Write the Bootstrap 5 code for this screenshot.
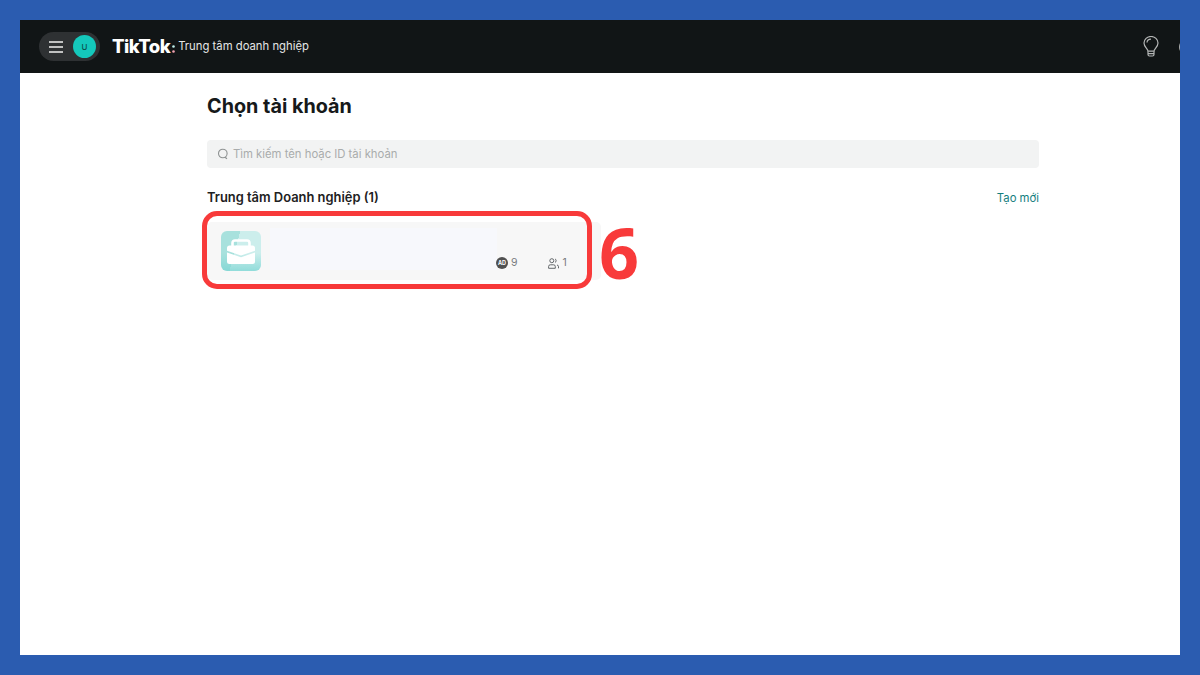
<!DOCTYPE html>
<html lang="vi">
<head>
<meta charset="utf-8">
<title>Chọn tài khoản</title>
<link href="https://cdn.jsdelivr.net/npm/bootstrap@5.3.0/dist/css/bootstrap.min.css" rel="stylesheet">
<style>
html,body{height:100%;margin:0;overflow:hidden}
body{background:#2b5cb0;font-family:Inter,"Liberation Sans",sans-serif;padding:20px 20px 20px 20px}
.frame-in{width:1160px;height:635px;background:#fff;overflow:hidden}
.top-bar{height:53px;background:#111516;padding-left:19px;padding-right:19px}
.pill{width:61px;height:29px;border-radius:15px;background:#2e3133;padding-left:10px;gap:10px}
.avatar-u{width:23px;height:23px;border-radius:50%;background:#14c8bb;color:#0a4f4c;font-size:8px;font-weight:500}
.logo-t{font-size:18.5px;font-weight:800;color:#fff;letter-spacing:-.5px;margin-left:12px;line-height:1}
.logo-mark{margin-left:2px;margin-right:3px;margin-top:4px}
.logo-sub{font-size:11.3px;color:#e4e5e5;line-height:1}
.edge-arc{width:6px;height:18px;overflow:hidden;margin-left:20px;margin-right:-24px}
.content-col{width:832px;margin-left:187px}
.page-ttl{font-size:19.8px;font-weight:700;color:#16191a;line-height:24px;margin:21px 0 0}
.search-box{height:28px;background:#f2f3f3;border-radius:4px;margin-top:22px;padding-left:10px;gap:4px;font-size:11.3px;color:#a9acac}
.sec-row{margin-top:20px;height:20px}
.sec-ttl{font-size:12.9px;font-weight:600;color:#1d2122}
.new-link{font-size:11.3px;color:#137e7e;text-decoration:none}
.biz-card{width:394px;height:58px;background:#f7f7f7;border-radius:5px;margin-top:14px;padding:9px 14px}
.biz-icon{width:40px;height:40px;border-radius:6px;background:linear-gradient(180deg,rgba(134,217,215,0) 55%,rgba(120,212,210,.7)),linear-gradient(105deg,#a8e1dd 0 38%,#cceeec 38%);flex:none}
.biz-name{width:227px;height:42px;background:#f7f8fc;margin-left:9px;margin-top:-3px;flex:none}
.biz-stats{position:absolute;left:289px;top:35px;font-size:10.5px;color:#777b7e;line-height:12px}
.ad-dot{width:12px;height:12px;border-radius:50%;background:#505050;color:#fff;font-size:5.5px;font-weight:700;margin-right:3px}
.stat-b{margin-left:30px}
.red-box{position:absolute;left:-5px;top:-11px;width:390px;height:78px;border:5px solid #f83a3a;border-radius:15px}
.red-six{position:absolute;left:392px;top:-13px;font-family:"Open Sans","Noto Sans",sans-serif;font-weight:700;font-size:70px;line-height:86px;color:#f83a3a}
</style>
</head>
<body>
<div class="frame-in">
  <div class="top-bar d-flex align-items-center">
    <div class="pill d-flex align-items-center">
      <svg width="14" height="12" viewBox="0 0 14 12" aria-hidden="true"><path d="M0 1h14M0 6h14M0 11h14" stroke="#f1f1f1" stroke-width="1.4" fill="none"/></svg>
      <div class="avatar-u d-flex align-items-center justify-content-center">U</div>
    </div>
    <span class="logo-t">TikTok</span>
    <svg class="logo-mark" width="3" height="8" viewBox="0 0 3 8" aria-hidden="true"><circle cx="1.500" cy="1.500" r="1.300" fill="#bfeeea"/><circle cx="1.500" cy="6.500" r="1.300" fill="#f2a3b3"/></svg>
    <span class="logo-sub">Trung tâm doanh nghiệp</span>
    <div class="ms-auto d-flex align-items-center">
      <svg width="16" height="21" viewBox="0 0 16 21" fill="none" stroke="#b4b6b6" stroke-width="1.2" aria-hidden="true"><path d="M5 15.2c0-2.2-4-3.900-4-8.200a7 6.500 0 0 1 14 0c0 4.300-4 6-4 8.200z"/><path d="M5 15.200v3.300q0 1.500 1.500 1.500h3q1.500 0 1.500-1.500v-3.300M5.300 17.600h5.400"/><path d="M4 6.500a4 3.500 0 0 1 4-3.300"/></svg>
      <svg class="edge-arc" viewBox="0 0 6 18" fill="none" stroke="#b4b6b6" stroke-width="1.300" aria-hidden="true"><path d="M8.700 1a8 8 0 0 0 0 16"/></svg>
    </div>
  </div>
  <div class="content-col">
    <h1 class="page-ttl">Chọn tài khoản</h1>
    <div class="search-box d-flex align-items-center">
      <svg width="12" height="12" viewBox="0 0 12 12" fill="none" stroke="#8e9292" stroke-width="1.100" aria-hidden="true"><circle cx="5.800" cy="5.500" r="4.300"/><path d="M8 9.300l2 1.500"/></svg>
      <span>Tìm kiếm tên hoặc ID tài khoản</span>
    </div>
    <div class="sec-row d-flex align-items-center justify-content-between">
      <span class="sec-ttl">Trung tâm Doanh nghiệp (1)</span>
      <a class="new-link" href="#">Tạo mới</a>
    </div>
    <div class="position-relative">
      <div class="biz-card d-flex position-relative">
        <div class="biz-icon d-flex align-items-center justify-content-center">
          <svg width="28" height="25" viewBox="0 0 28 25" aria-hidden="true"><path d="M5.500 7.500V4Q5.500 1.500 8 1.500h12q2.500 0 2.500 2.500v3.500" fill="none" stroke="#fff" stroke-width="2.600"/><path d="M0 9q0-2.500 2.500-2.500h23Q28 6.500 28 9v2.800L14 16.500 0 11.800z" fill="#fff"/><path d="M0 13.500l14 4.700 14-4.700v9q0 2.500-2.500 2.500h-23Q0 25 0 22.500z" fill="#fff"/></svg>
        </div>
        <div class="biz-name"></div>
        <div class="biz-stats d-flex align-items-center">
          <span class="ad-dot d-flex align-items-center justify-content-center">AD</span><span>9</span>
          <svg class="stat-b me-1" width="11" height="11" viewBox="0 0 11 11" fill="none" stroke="#55595c" stroke-width=".9" aria-hidden="true"><circle cx="3.800" cy="2.700" r="2"/><path d="M7 .9a2 2 0 0 1 0 3.600M.6 10.300V8.500q0-1.700 1.700-1.700h3.300q1.700 0 1.700 1.700v1.800zM9 7q1.500.2 1.500 1.700v1.600"/></svg>
          <span>1</span>
        </div>
      </div>
      <div class="red-box"></div>
      <div class="red-six">6</div>
    </div>
  </div>
</div>
</body>
</html>
